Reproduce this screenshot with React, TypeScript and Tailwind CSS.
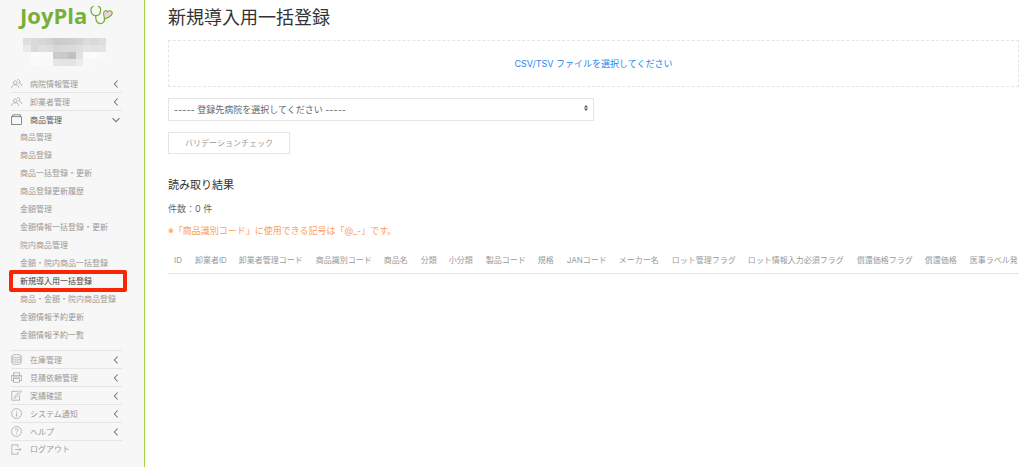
import type { ReactNode } from 'react';

type IconName = 'users' | 'folder' | 'stack' | 'printer' | 'edit' | 'info' | 'help' | 'logout';

const ICONS: Record<IconName, ReactNode> = {
  users: (
    <>
      <circle cx="7.7" cy="8.6" r="3.2" />
      <path d="M1 18.1c.1-3.3 2.3-5.8 6.7-5.8s6.6 2.5 6.7 5.8" />
      <path d="M10.9 4.3a2.9 2.9 0 1 1 3.1 4.6c3.1.2 5 2.2 5.3 5.5" />
    </>
  ),
  folder: (
    <>
      <rect x="1" y="5" width="18" height="14" />
      <path d="M3 5V1.5h14V5" />
    </>
  ),
  stack: (
    <>
      <ellipse cx="10" cy="4" rx="8.5" ry="3" />
      <path d="M1.5 4v12c0 1.7 3.8 3 8.5 3s8.5-1.3 8.5-3V4" />
      <path d="M1.5 8c0 1.7 3.8 3 8.5 3s8.5-1.3 8.5-3M1.5 12c0 1.7 3.8 3 8.5 3s8.5-1.3 8.5-3" />
    </>
  ),
  printer: (
    <>
      <path d="M4.5 15.5h-4v-9h19v9h-4" />
      <path d="M4.5 6.5v-5h11v5" />
      <rect x="4.5" y="11.5" width="11" height="7" />
      <path d="M2.5 9h15" />
    </>
  ),
  edit: (
    <>
      <path d="M15.5 10v8.5h-14v-16h11" />
      <path d="M18.9 2.5l-1.6-1.4c-.3-.2-.7-.2-1 0L6.9 11.4 5.7 14.8l3.3-1.4 9.9-9.8c.3-.3.3-.8 0-1.1z" />
    </>
  ),
  info: (
    <>
      <circle cx="10" cy="10" r="9" />
      <path d="M10 5.2v1.6M9 9h1.2v5.4M8.7 14.6h2.8" />
    </>
  ),
  help: (
    <>
      <circle cx="10" cy="10" r="9" />
      <path d="M7.4 7.6c.1-3.4 5.2-3.3 5.2-.1 0 2-2.6 2.3-2.6 4.4M10 13.6v1.6" />
    </>
  ),
  logout: (
    <>
      <path d="M12.5 5.5v-4h-11v17h11v-4" />
      <path d="M7 10h11M15 7l3 3-3 3" />
    </>
  ),
};

type MenuEntry = {
  label: string;
  icon: IconName;
  children?: string[];
  leaf?: boolean;
};

const MENU: MenuEntry[] = [
  { label: '病院情報管理', icon: 'users' },
  { label: '卸業者管理', icon: 'users' },
  {
    label: '商品管理',
    icon: 'folder',
    children: [
      '商品管理',
      '商品登録',
      '商品一括登録・更新',
      '商品登録更新履歴',
      '金額管理',
      '金額情報一括登録・更新',
      '院内商品管理',
      '金額・院内商品一括登録',
      '新規導入用一括登録',
      '商品・金額・院内商品登録',
      '金額情報予約更新',
      '金額情報予約一覧',
    ],
  },
  { label: '在庫管理', icon: 'stack' },
  { label: '見積依頼管理', icon: 'printer' },
  { label: '実績確認', icon: 'edit' },
  { label: 'システム通知', icon: 'info' },
  { label: 'ヘルプ', icon: 'help' },
  { label: 'ログアウト', icon: 'logout', leaf: true },
];

const CURRENT = '新規導入用一括登録';

const COLUMNS = [
  'ID',
  '卸業者ID',
  '卸業者管理コード',
  '商品識別コード',
  '商品名',
  '分類',
  '小分類',
  '製品コード',
  '規格',
  'JANコード',
  'メーカー名',
  'ロット管理フラグ',
  'ロット情報入力必須フラグ',
  '償還価格フラグ',
  '償還価格',
  '医事ラベル発',
];

// hospital name is masked
const MASK = [
  ['#dedede', '#dadada', '#d8d8d8', '#d3d3d3', '#cbcbcb', '#cccccc', '#cfcfcf', '#d3d3d3', '#dcdcdc', '#d8d8d8', '#dedede'],
  ['#e9e9e9', '#d9d9d9', '#e0e0e0', '#dddddd', '#d6d6d6', '#d9d9d9', '#dadada', '#dedede', '#e4e4e4', '#e2e2e2', '#e4e4e4'],
  ['#f7f7f7', '#fbfbfb', '#fafafa', '#fafafa', '#cbcbcb', '#cacaca', '#c1c1c1', '#e2e2e2', '#fbfbfb', '#fcfcfc', '#f9f9f9'],
  ['#f7f7f7', '#fafafa', '#f9f9f9', '#f9f9f9', '#e6e6e6', '#e4e4e4', '#e3e3e3', '#ececec', '#f8f8f8', '#f7f7f7', '#f7f7f7'],
];

function Icon({ name }: { name: IconName }) {
  return (
    <svg viewBox="0 0 20 20" className="size-[11px] shrink-0" fill="none" stroke="currentColor" strokeWidth="1.2" aria-hidden="true">
      {ICONS[name]}
    </svg>
  );
}

function Chevron({ open }: { open: boolean }) {
  return (
    <svg viewBox="0 0 8 8" className="mr-[2px] ml-auto size-2 shrink-0 text-[#777]" fill="none" stroke="currentColor" strokeWidth="1.1" aria-hidden="true">
      {open ? <path d="M0.5 2.2L4 5.7 7.5 2.2" /> : <path d="M5.6 0.5L2.4 4l3.2 3.5" />}
    </svg>
  );
}

function Logo() {
  return (
    <a href="#" className="flex items-center gap-[3px] pl-[9px] text-[#76b03a]" aria-label="JoyPla">
      <span className="font-['Open_Sans',sans-serif] text-[22px] leading-6 font-bold">JoyPla</span>
      <svg viewBox="0 0 23 20" className="h-5 w-[23px] shrink-0" fill="none" stroke="currentColor" strokeWidth="1.3" aria-hidden="true">
        <path d="M3.6 1.3C1.5 1.6.9 3.4 1 5.2c.2 3.200 2.100 5.500 4.900 5.500s4.600-2.400 4.700-5.500c.1-2-.7-3.700-2.700-3.900" />
        <path d="M5.700 10.700c-.2 4.600 1.300 7.900 4.700 7.900 3.600 0 4.400-3 4-5.500-.4-2.500-1.700-6.800.9-7.300 1.300-.2 2 .5 2.200 1.400.9-1.500 2.900-1.700 4.100-.5 1.500 1.800.2 4.500-7 7.200" />
        <path d="M15 7.300c.7-.9 1.900-.4 2.300.8 1-1.700 3.300-1.600 3.600-.2.3 1.400-2.300 2.900-5.400 4.300-.7-1.400-1.100-3.500-.5-4.900z" fill="#f6ccd8" stroke="none" />
      </svg>
    </a>
  );
}

function SubMenu({ items }: { items: string[] }) {
  return (
    <ul className="border-b border-[#e5e5e5] pb-[6px]">
      {items.map((item) => (
        <li key={item} className="flex h-[18px] items-center">
          {item === CURRENT ? (
            <a
              href="#"
              aria-current="page"
              className="-mr-[5px] -ml-[2px] flex h-[22px] flex-1 shrink-0 items-center rounded-[2px] border-4 border-[#fb2506] pl-[7px] text-[#444]"
            >
              {item}
            </a>
          ) : (
            <a href="#" className="pl-[9px] whitespace-nowrap">
              {item}
            </a>
          )}
        </li>
      ))}
    </ul>
  );
}

function Sidebar() {
  return (
    <aside className="w-[145px] shrink-0 border-r border-[#a9d045] bg-[#f7f7f7] pt-[3px] pr-[22px] pl-[11px] text-[#999]">
      <Logo />
      <svg viewBox="0 0 11 4" preserveAspectRatio="none" className="mt-[11px] ml-[12px] h-[28px] w-[83px]" shapeRendering="crispEdges" aria-hidden="true">
        {MASK.map((row, y) => row.map((fill, x) => <rect key={`${x}-${y}`} x={x} y={y} width="1" height="1" fill={fill} />))}
      </svg>
      <nav className="mt-[9px] text-[8px] leading-3">
        {MENU.map((entry) => (
          <div key={entry.label}>
            {entry.leaf ? (
              <a href="#" className="flex h-4 items-center gap-2">
                <Icon name={entry.icon} />
                {entry.label}
              </a>
            ) : (
              <button
                type="button"
                aria-expanded={!!entry.children}
                className={
                  entry.children
                    ? 'flex h-[17px] w-full items-center gap-2 text-[#555]'
                    : 'flex h-[18px] w-full items-center gap-2 border-b border-[#e5e5e5]'
                }
              >
                <Icon name={entry.icon} />
                {entry.label}
                <Chevron open={!!entry.children} />
              </button>
            )}
            {entry.children && <SubMenu items={entry.children} />}
          </div>
        ))}
      </nav>
    </aside>
  );
}

export default function App() {
  return (
    <div className="flex min-h-screen bg-white font-[Inter,'Noto_Sans_CJK_JP',sans-serif] text-[#666]">
      <Sidebar />
      <main className="min-w-0 flex-1 pt-[6px] pr-[5px] pl-[23px] text-[9px] leading-[14px]">
        <h1 className="text-[18px] leading-6 text-[#333]">新規導入用一括登録</h1>

        <label className="mt-[10px] flex h-[47px] cursor-pointer items-center justify-center border border-dashed border-[#e5e5e5] text-[#1e87f0]">
          CSV/TSV ファイルを選択してください
          <input type="file" accept=".csv,.tsv" className="sr-only" />
        </label>

        <div className="relative mt-[11px] w-1/2">
          <select aria-label="登録先病院" className="h-[23px] w-full appearance-none border border-[#e5e5e5] bg-white px-[5px]">
            <option>----- 登録先病院を選択してください -----</option>
          </select>
          <svg viewBox="0 0 4 6" className="pointer-events-none absolute top-[7px] right-[6px] h-[6px] w-1" fill="#555" aria-hidden="true">
            <path d="M0 2.5L2 0l2 2.5zM0 3.5h4L2 6z" />
          </svg>
        </div>

        <button type="button" className="mt-[11px] flex h-[22px] w-[122px] items-center justify-center border border-[#e5e5e5] text-[8px] text-[#999]">
          バリデーションチェック
        </button>

        <h2 className="mt-[23px] text-[11px] leading-4 text-[#333]">読み取り結果</h2>
        <p className="mt-[9px]">件数：0 件</p>
        <p className="mt-2 text-[#faa05a]">※「商品識別コード」に使用できる記号は「@_-」です。</p>

        <div className="mt-[9px] overflow-hidden">
          <table className="w-full border-b border-[#e5e5e5]">
            <thead>
              <tr>
                {COLUMNS.map((column) => (
                  <th
                    key={column}
                    scope="col"
                    className="h-[26px] pr-[7px] pl-[6px] text-left text-[8px] font-normal whitespace-nowrap text-[#999] last:pr-0 even:pr-[6px]"
                  >
                    {column}
                  </th>
                ))}
              </tr>
            </thead>
          </table>
        </div>
      </main>
    </div>
  );
}
